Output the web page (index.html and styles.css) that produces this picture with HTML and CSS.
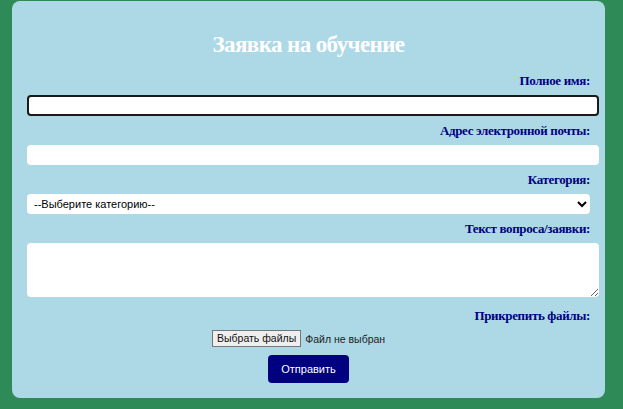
FILE: index.html
```html
<!DOCTYPE html>
<html lang="ru">
<head>
<meta charset="utf-8">
<title>Заявка на обучение</title>
<link rel="stylesheet" href="styles.css">
</head>
<body>
<div class="card">
  <h2 class="title">Заявка на обучение</h2>
  <form class="form">
    <label class="lbl" for="name">Полное имя:</label>
    <input class="field field-focus" id="name" type="text">
    <label class="lbl" for="email">Адрес электронной почты:</label>
    <input class="field" id="email" type="text">
    <label class="lbl" for="cat">Категория:</label>
    <select class="select" id="cat">
      <option>--Выберите категорию--</option>
    </select>
    <label class="lbl" for="msg">Текст вопроса/заявки:</label>
    <textarea class="area" id="msg"></textarea>
    <label class="lbl">Прикрепить файлы:</label>
    <div class="file-row">
      <span class="file-box"><button type="button" class="file-btn">Выбрать файлы</button><span class="file-text">Файл не выбран</span></span>
    </div>
    <div class="submit-row">
      <button type="button" class="submit">Отправить</button>
    </div>
  </form>
</div>
</body>
</html>
```
FILE: styles.css
```css
html, body {
  margin: 0;
  padding: 0;
}
body {
  background: #2e8b57;
  padding: 1px 18px 11px 12px;
  font-family: "Liberation Serif", "Times New Roman", serif;
}
.card {
  background: #add8e6;
  border-radius: 8px;
  padding: 30px 15px 15px 15px;
}
.title {
  margin: 0 0 14px;
  font-size: 23px;
  line-height: 28px;
  letter-spacing: -0.6px;
  font-weight: bold;
  color: #ffffff;
  text-align: center;
}
.form {
  display: block;
}
.lbl {
  display: block;
  margin: 7px 0 7px;
  font-size: 13px;
  line-height: 15px;
  letter-spacing: -0.35px;
  font-weight: bold;
  color: #000080;
  text-align: right;
}
.field {
  display: block;
  box-sizing: content-box;
  width: 100%;
  height: 20px;
  padding: 0 4.5px;
  border: 0;
  border-radius: 4px;
  background: #fff;
  outline: none;
  font-family: "Liberation Sans", Arial, sans-serif;
  font-size: 12px;
}
.field-focus {
  height: 17px;
  padding: 0 2.5px;
  border: 2px solid #1a1a1a;
}
.select {
  display: block;
  box-sizing: border-box;
  width: 100%;
  height: 20px;
  padding: 0 3px;
  border: 0;
  border-radius: 4px;
  background: #fff;
  color: #000;
  font-family: "Liberation Sans", Arial, sans-serif;
  font-size: 11px;
}
.area {
  display: block;
  box-sizing: content-box;
  width: 100%;
  height: 54px;
  padding: 0 4.5px;
  margin: 0 0 11px;
  border: 0;
  border-radius: 4px;
  background: #fff;
  outline: none;
}
.file-row {
  display: flex;
  justify-content: center;
}
.file-box {
  display: flex;
  align-items: center;
  width: 193px;
}
.file-btn {
  height: 17px;
  padding: 0 4px;
  margin: 0 4px 0 0;
  border: 1px solid #767676;
  border-radius: 0;
  background: #efefef;
  color: #111;
  font-family: "Liberation Sans", Arial, sans-serif;
  font-size: 10.5px;
  line-height: 15px;
}
.file-text {
  font-family: "Liberation Sans", Arial, sans-serif;
  font-size: 10.5px;
  color: #222;
}
.submit-row {
  display: flex;
  justify-content: center;
  margin-top: 8px;
}
.submit {
  width: 81px;
  height: 28px;
  border: 0;
  border-radius: 4px;
  background: #000080;
  color: #fff;
  font-family: "Liberation Sans", Arial, sans-serif;
  font-size: 11px;
}
```
